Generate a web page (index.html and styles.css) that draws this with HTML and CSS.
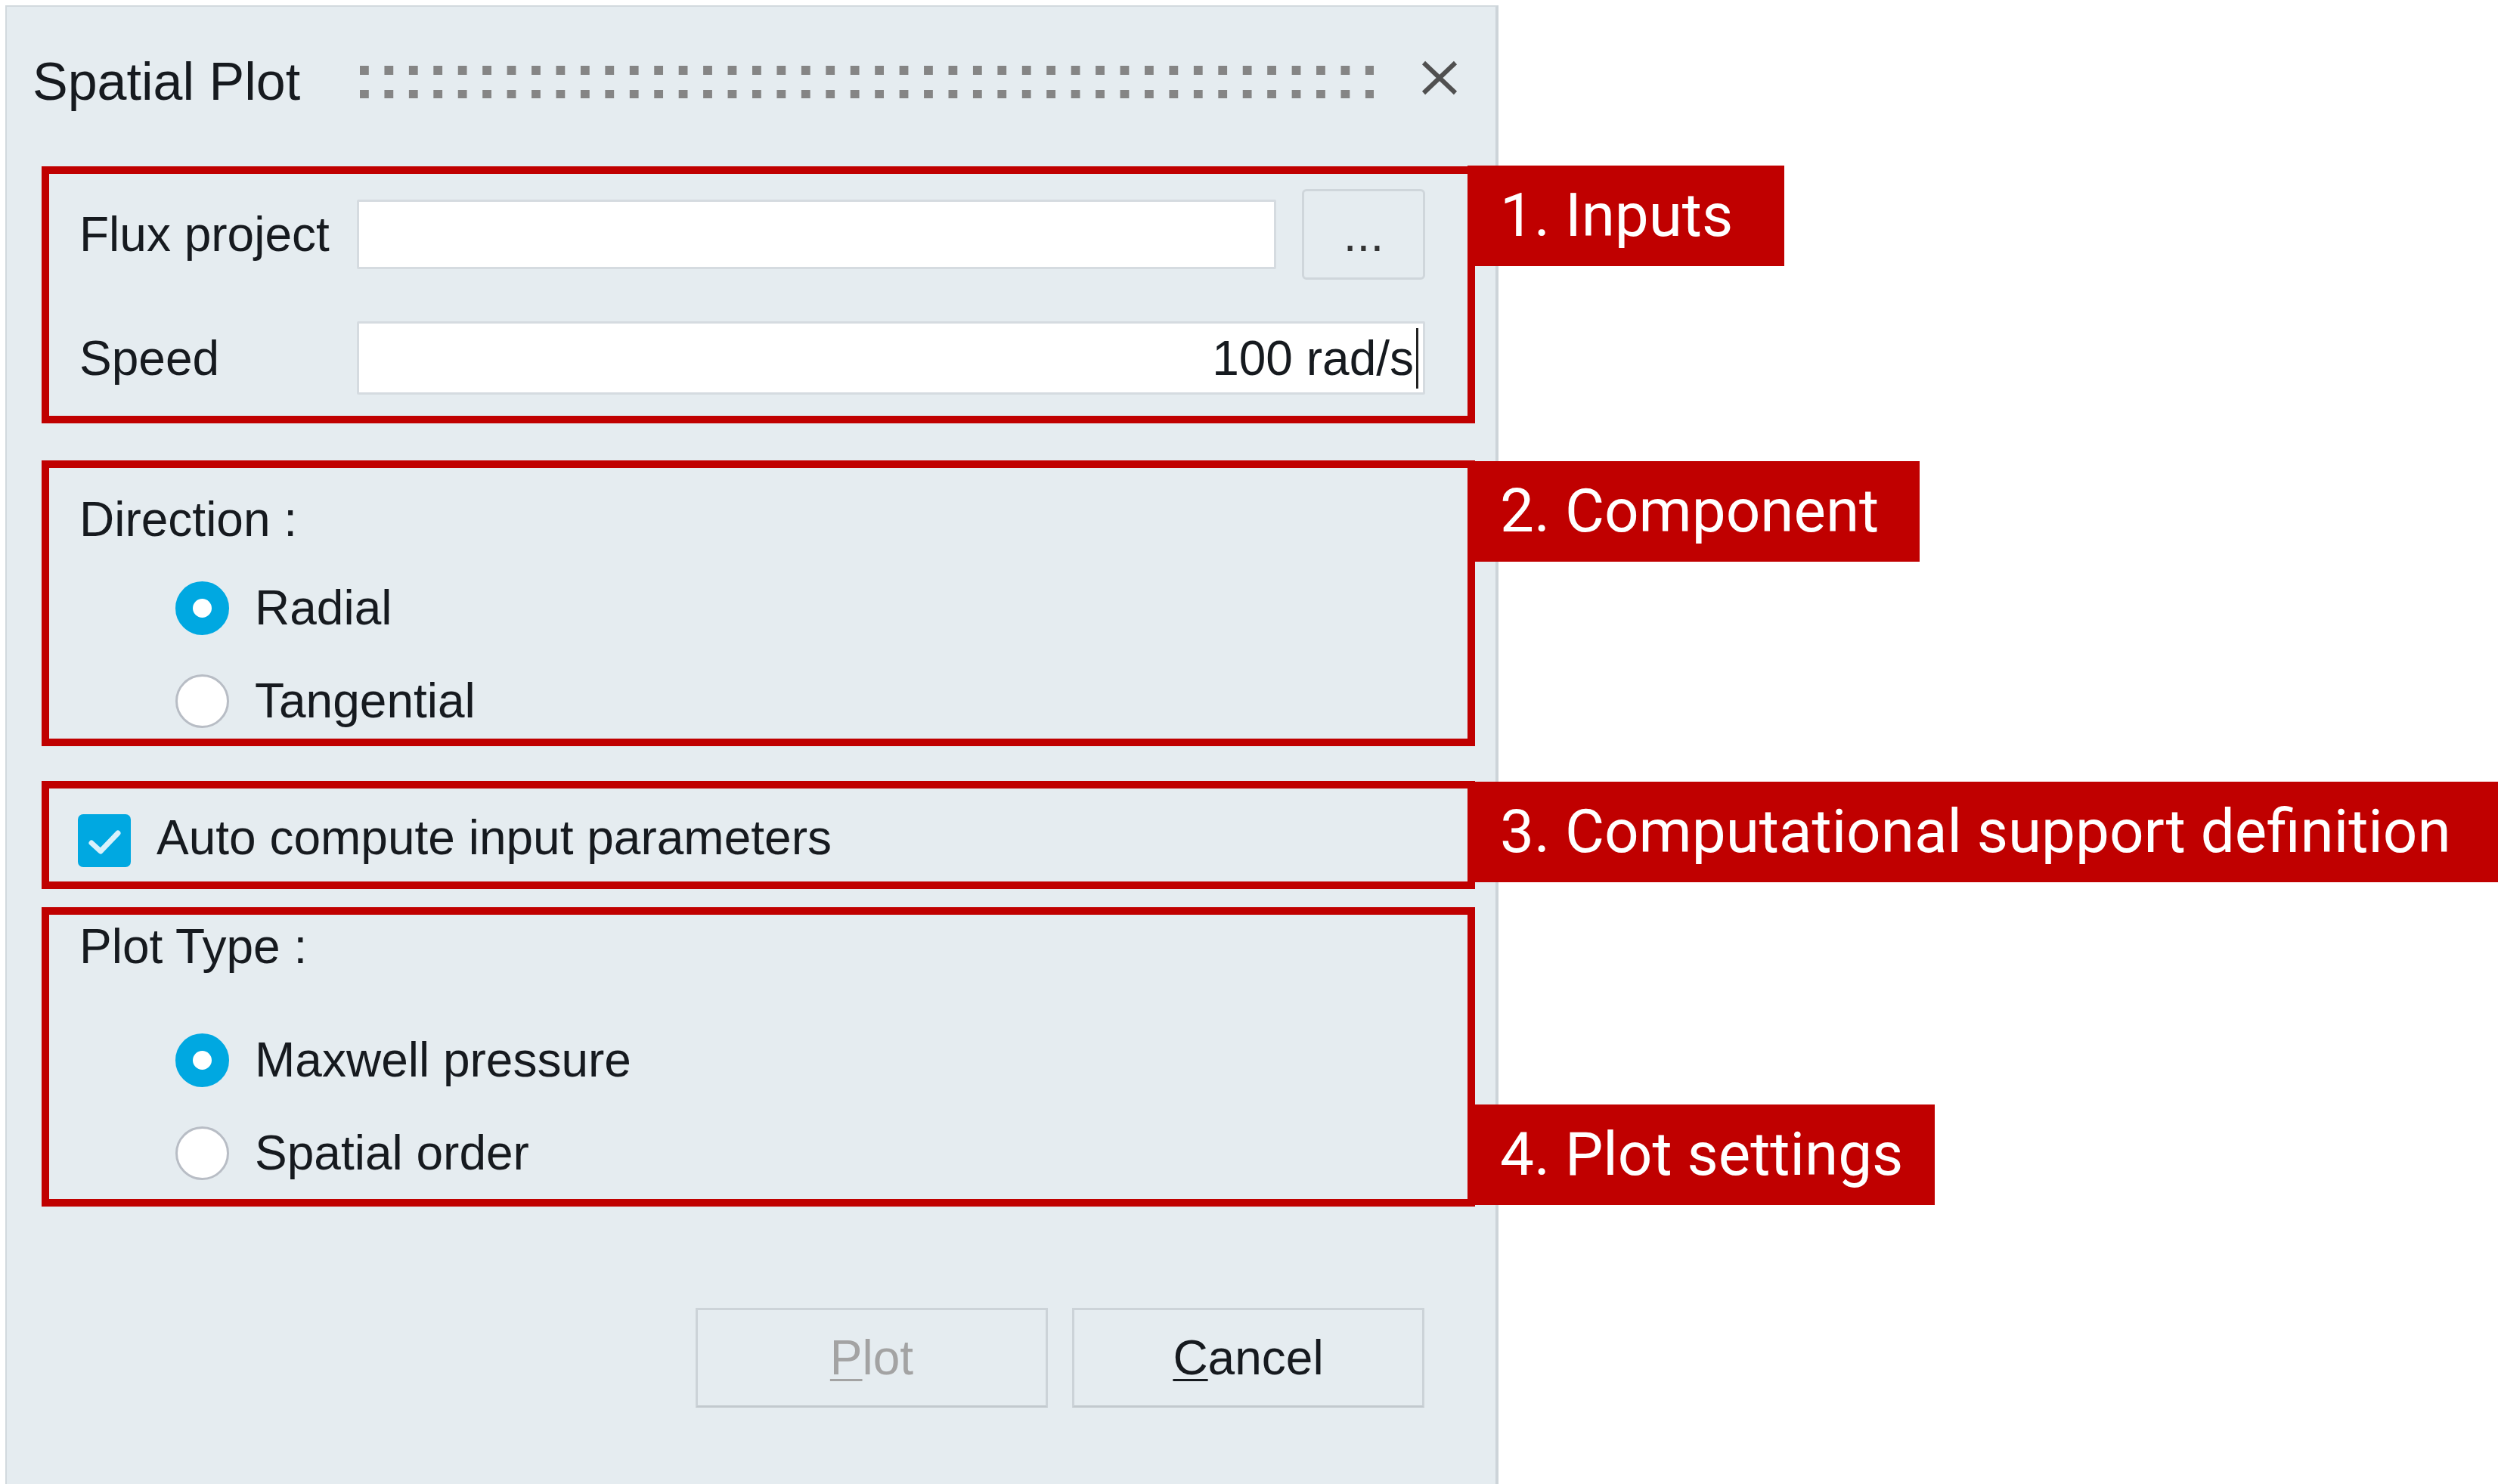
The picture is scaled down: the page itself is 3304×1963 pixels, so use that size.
FILE: index.html
```html
<!DOCTYPE html>
<html lang="en">
<head>
    <meta charset="UTF-8">
    <meta name="viewport" content="width=device-width, initial-scale=1.0">
    <title>Spatial Plot</title>
    <link rel="stylesheet" href="styles.css">
</head>
<body>
    <div class="panel">
        <div class="titlebar">
            <span class="title">Spatial Plot</span>
            <span class="grip"></span>
            <svg class="close" viewBox="0 0 48 46" width="48" height="46">
                <path d="M3 3 L45 43 M45 3 L3 43" />
            </svg>
        </div>

        <div class="content">
            <section class="box inputs">
                <span class="lbl">Flux project</span>
                <div class="field"></div>
                <button class="browse">...</button>
                <span class="lbl">Speed</span>
                <div class="field field-speed">100 rad/s<span class="caret"></span></div>
                <div class="tag tag-inputs">1. Inputs</div>
            </section>

            <section class="box component">
                <div class="heading">Direction :</div>
                <div class="options">
                    <div class="option"><span class="radio on"></span>Radial</div>
                    <div class="option"><span class="radio"></span>Tangential</div>
                </div>
                <div class="tag tag-component">2. Component</div>
            </section>

            <section class="box support">
                <span class="check">
                    <svg viewBox="0 0 70 70" width="70" height="70">
                        <polyline points="18,38 30,49 53,25" />
                    </svg>
                </span>
                <span class="check-text">Auto compute input parameters</span>
                <div class="tag tag-support">3. Computational support definition</div>
            </section>

            <section class="box plot-settings">
                <div class="heading">Plot Type :</div>
                <div class="options options-plot">
                    <div class="option"><span class="radio on"></span>Maxwell pressure</div>
                    <div class="option"><span class="radio"></span>Spatial order</div>
                </div>
                <div class="tag tag-plot">4. Plot settings</div>
            </section>

            <div class="actions">
                <button class="btn disabled"><u>P</u>lot</button>
                <button class="btn"><u>C</u>ancel</button>
            </div>
        </div>
    </div>
</body>
</html>
```

FILE: styles.css
```css
body {
    margin: 0;
    background: #fff;
    font-family: "Liberation Sans", Arial, sans-serif;
    font-size: 64px;
    color: #161a1f;
    overflow: hidden;
}
.panel {
    margin: 7px 0 0 7px;
    width: 1975px;
    height: 1956px;
    box-sizing: border-box;
    background: #e5ecf0;
    border: 2px solid #d2d9de;
    border-right: 4px solid #cdd4d9;
    border-bottom: 0;
}
.titlebar {
    display: flex;
    align-items: center;
    height: 100px;
    margin-top: 49px;
    padding: 0 50px 0 34px;
}
.title {
    font-size: 70px;
    line-height: 100px;
    white-space: nowrap;
}
.grip {
    width: 1341px;
    height: 43px;
    margin-left: 79px;
    background-image:
        linear-gradient(to bottom, transparent 12px, #e5ecf0 12px),
        linear-gradient(to right, #858585 12px, transparent 12px);
    background-size: 32.44px 32px;
}
.close {
    margin-left: auto;
    margin-bottom: 10px;
    fill: none;
    stroke: #505050;
    stroke-width: 6;
}
.content {
    padding: 62px 27px 0 46px;
}
.box {
    position: relative;
    border: 10px solid #c00000;
}
.tag {
    position: absolute;
    left: 100%;
    height: 133px;
    line-height: 133px;
    box-sizing: border-box;
    padding-left: 43px;
    background: #c00000;
    color: #fff;
    font-family: Roboto, "Liberation Sans", sans-serif;
    font-size: 80px;
    white-space: nowrap;
}
.tag-inputs { top: -11px; width: 419px; }
.tag-component { top: -9px; width: 598px; }
.tag-support { top: -9px; width: 1363px; }
.tag-plot { bottom: -8px; width: 618px; }

.inputs {
    display: grid;
    grid-template-columns: 333px 1fr 163px;
    column-gap: 34px;
    row-gap: 55px;
    align-items: center;
    padding: 20px 56px 28px 40px;
}
.lbl {
    line-height: 72px;
    white-space: nowrap;
}
.field {
    height: 92px;
    box-sizing: border-box;
    background: #fff;
    border: 3px solid #d5dbe0;
    border-radius: 2px;
}
.field-speed {
    grid-column: 2 / 4;
    height: 97px;
    display: flex;
    align-items: center;
    justify-content: flex-end;
    padding-right: 6px;
}
.caret {
    display: inline-block;
    width: 3px;
    height: 80px;
    margin-left: 3px;
    background: #222;
}
.browse {
    height: 120px;
    padding: 0;
    background: transparent;
    border: 3px solid #cfd6db;
    border-radius: 6px;
    font: inherit;
    color: #333;
}
.component {
    margin-top: 49px;
    padding: 32px 40px 14px;
}
.heading {
    line-height: 72px;
}
.options {
    display: flex;
    flex-direction: column;
    gap: 51px;
    margin: 45px 0 0 127px;
}
.options-plot {
    margin-top: 78px;
}
.option {
    display: flex;
    align-items: center;
    gap: 34px;
    height: 72px;
}
.radio {
    flex: none;
    width: 71px;
    height: 71px;
    box-sizing: border-box;
    border-radius: 50%;
    background: #fff;
    border: 3px solid #b8bdc5;
}
.radio.on {
    border: 23px solid #00a8e1;
}
.support {
    margin-top: 46px;
    display: flex;
    align-items: center;
    gap: 34px;
    padding: 34px 40px 19px 38px;
}
.check {
    flex: none;
    width: 70px;
    height: 70px;
    border-radius: 7px;
    background: #00a8e1;
}
.check svg {
    display: block;
    fill: none;
    stroke: #d8f1fb;
    stroke-width: 7;
    stroke-linecap: round;
    stroke-linejoin: round;
}
.check-text {
    line-height: 72px;
    margin-top: -8px;
}
.plot-settings {
    margin-top: 24px;
    padding: 6px 40px 25px;
}
.actions {
    display: flex;
    justify-content: flex-end;
    gap: 32px;
    margin-top: 134px;
    padding-right: 67px;
}
.btn {
    width: 466px;
    height: 132px;
    padding: 0;
    background: transparent;
    border: 3px solid #ccd3d8;
    border-bottom-color: #c2c9ce;
    font: inherit;
    color: #161a1f;
}
.btn.disabled {
    color: #a3a3a3;
}
.btn u {
    text-underline-offset: 6px;
    text-decoration-thickness: 3px;
}
```
